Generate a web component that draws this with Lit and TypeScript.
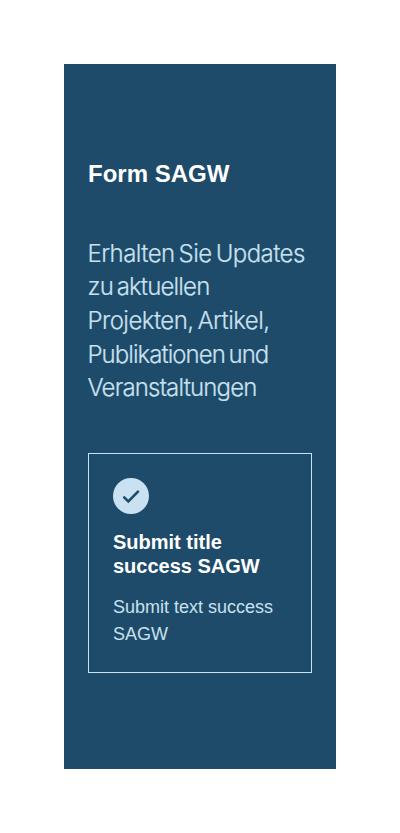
import { LitElement, html, css } from "lit";
import { customElement } from "lit/decorators.js";

@customElement("app-root")
export class AppRoot extends LitElement {
  static styles = css`
    :host {
      display: block;
      box-sizing: border-box;
      padding: 64px;
      background: #fff;
      font-family: "Liberation Sans", Arial, sans-serif;
      color: #c9e1f0;
    }
    .panel {
      padding: 96px 24px;
      background: #1e4b69;
    }
    h2 {
      margin: 0 0 48px;
      font-size: 24px;
      line-height: 28.8px;
      font-weight: 700;
      color: #fff;
    }
    .lead {
      margin: 0 0 48px;
      font-family: Inter, sans-serif;
      font-size: 24px;
      font-weight: 300;
      line-height: 33.6px;
      letter-spacing: -0.84px;
      word-spacing: -2.2px;
      text-indent: -0.5px;
      white-space: nowrap;
      -webkit-text-stroke: 0.2px currentColor;
    }
    .line {
      display: block;
    }
    .loose {
      letter-spacing: -0.55px;
    }
    .tight {
      letter-spacing: -0.96px;
    }
    .card {
      box-sizing: border-box;
      height: 220px;
      padding: 24px;
      border: 1px solid #c9e1f0;
    }
    .icon {
      display: block;
      width: 36px;
      height: 36px;
      margin-bottom: 16px;
    }
    h3 {
      margin: 0 0 16px;
      font-size: 20px;
      line-height: 24px;
      color: #fff;
    }
    .text {
      margin: 0;
      font-size: 18px;
      line-height: 27px;
    }
  `;

  render() {
    return html`
      <section class="panel">
        <h2>Form SAGW</h2>
        <p class="lead">
          <span class="line loose">Erhalten Sie Updates</span>
          <span class="line">zu aktuellen</span>
          <span class="line loose">Projekten, Artikel,</span>
          <span class="line tight">Publikationen und</span>
          <span class="line">Veranstaltungen</span>
        </p>
        <div class="card">
          <svg class="icon" viewBox="0 0 36 36" aria-hidden="true">
            <circle cx="18" cy="18" r="18" fill="#c9e1f0" />
            <path
              d="M11.2 19.4l4.1 4L25 13.6"
              fill="none"
              stroke="#1e4b69"
              stroke-width="2.6"
              stroke-linecap="round"
            />
          </svg>
          <h3>Submit title success SAGW</h3>
          <p class="text">Submit text success SAGW</p>
        </div>
      </section>
    `;
  }
}
